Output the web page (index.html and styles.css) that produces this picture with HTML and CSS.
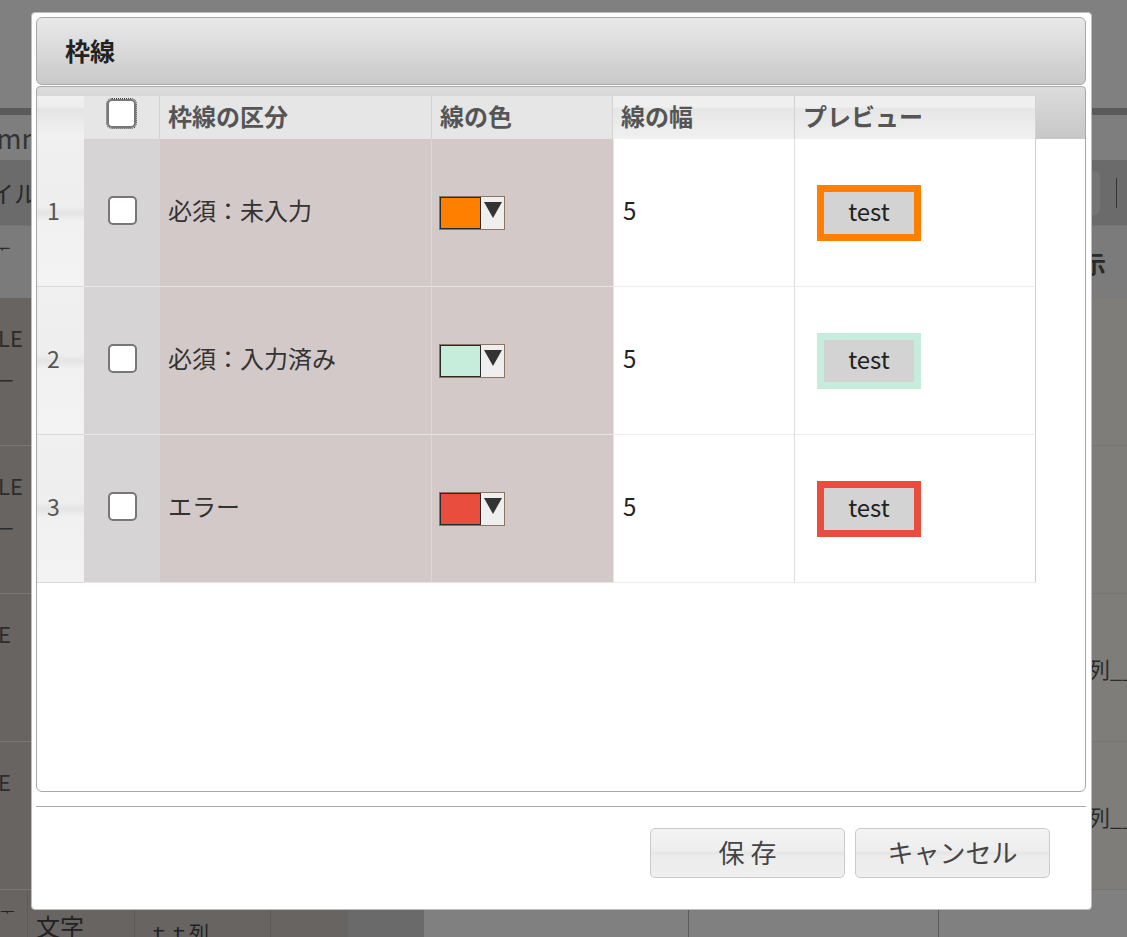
FILE: index.html
```html
<!DOCTYPE html>
<html lang="ja">
<head>
<meta charset="utf-8">
<title>枠線</title>
<link rel="stylesheet" href="styles.css">
</head>
<body>
<div class="page">
  <div class="bg-top"></div>
  <div class="bg-rule"></div>
  <div class="bg-tabs"><span class="tabs-text">Comm</span></div>
  <div class="bg-tool">
    <span class="tool-text">ファイル</span>
    <div class="tool-right"><span class="tool-box"></span><span class="tool-line"></span></div>
  </div>
  <div class="bg-head"><span class="head-mark">ᅮ</span><span class="head-text">表示</span></div>
  <div class="bg-row">
    <div class="bg-l"><span class="l-text">LE</span><span class="l-dash">—</span></div>
    <div class="bg-m"></div>
    <div class="bg-r"></div>
  </div>
  <div class="bg-row">
    <div class="bg-l"><span class="l-text">LE</span><span class="l-dash">—</span></div>
    <div class="bg-m"></div>
    <div class="bg-r"></div>
  </div>
  <div class="bg-row">
    <div class="bg-l"><span class="l-text">E</span></div>
    <div class="bg-m"></div>
    <div class="bg-r"><span class="r-text">列__</span></div>
  </div>
  <div class="bg-row">
    <div class="bg-l"><span class="l-text">E</span></div>
    <div class="bg-m"></div>
    <div class="bg-r"><span class="r-text">列__</span></div>
  </div>
  <div class="bg-last">
    <div class="lc c1">ᅮ</div>
    <div class="lc c2">文字</div>
    <div class="lc c3">ｔｔ列</div>
    <div class="lc c4"></div>
    <div class="lc c5"></div>
    <div class="lc c6"></div>
    <div class="lc c7"></div>
    <div class="lc c8"></div>
  </div>
</div>

<div class="dialog">
  <div class="titlebar">枠線</div>
  <div class="pane">
    <div class="grid">
      <div class="hc hnum"></div>
      <div class="hc hchk"><input type="checkbox" class="cb cb-focus"></div>
      <div class="hc hdark">枠線の区分</div>
      <div class="hc hdark">線の色</div>
      <div class="hc hlight">線の幅</div>
      <div class="hc hlight">プレビュー</div>

      <div class="c cnum">1</div>
      <div class="c cchk"><input type="checkbox" class="cb"></div>
      <div class="c ctext">必須：未入力</div>
      <div class="c ccolor"><div class="cp"><span class="sw sw-orange"></span><span class="arr"><span class="tri"></span></span></div></div>
      <div class="c cwidth">5</div>
      <div class="c cprev"><div class="pv pv-orange">test</div></div>

      <div class="c cnum">2</div>
      <div class="c cchk"><input type="checkbox" class="cb"></div>
      <div class="c ctext">必須：入力済み</div>
      <div class="c ccolor"><div class="cp"><span class="sw sw-mint"></span><span class="arr"><span class="tri"></span></span></div></div>
      <div class="c cwidth">5</div>
      <div class="c cprev"><div class="pv pv-mint">test</div></div>

      <div class="c cnum">3</div>
      <div class="c cchk"><input type="checkbox" class="cb"></div>
      <div class="c ctext">エラー</div>
      <div class="c ccolor"><div class="cp"><span class="sw sw-red"></span><span class="arr"><span class="tri"></span></span></div></div>
      <div class="c cwidth">5</div>
      <div class="c cprev"><div class="pv pv-red">test</div></div>
    </div>
  </div>
  <div class="sep"></div>
  <div class="buttons">
    <div class="btn">保 存</div>
    <div class="btn">キャンセル</div>
  </div>
</div>
</body>
</html>
```
FILE: styles.css
```css
html, body {
  margin: 0;
  padding: 0;
}
body {
  width: 1127px;
  height: 937px;
  overflow: hidden;
  position: relative;
  background: #808080;
  font-family: "Noto Sans CJK JP", "Noto Sans", sans-serif;
}

/* ---------- dimmed page behind the modal ---------- */
.page {
  display: flex;
  flex-direction: column;
  width: 1127px;
  color: #2c2c2c;
}
.bg-top { height: 108px; background: #808080; }
.bg-rule { height: 7px; background: #5a5a5a; }
.bg-tabs {
  height: 45px;
  background: #7e7e7e;
  display: flex;
  align-items: center;
  font-size: 27px;
  overflow: hidden;
}
.tabs-text { margin-left: -37px; color: #333; }
.bg-tool {
  height: 65px;
  background: #6b6b6b;
  display: flex;
  align-items: center;
  justify-content: space-between;
  font-size: 24px;
  overflow: hidden;
}
.tool-text { margin-left: -58px; color: #2a2a2a; white-space: nowrap; }
.tool-right {
  display: flex;
  align-items: center;
  gap: 16px;
  padding-right: 10px;
}
.tool-box {
  width: 40px;
  height: 44px;
  background: #747474;
  border-radius: 0 6px 6px 0;
}
.tool-line {
  width: 1px;
  height: 30px;
  background: #333;
}
.bg-head {
  height: 73px;
  box-sizing: border-box;
  background: #7b7b7b;
  border-top: 1px solid #737373;
  display: flex;
  align-items: center;
  justify-content: space-between;
  font-size: 24px;
  font-weight: bold;
  overflow: hidden;
}
.head-mark { margin-left: -6px; font-weight: normal; font-size: 18px; margin-top: -30px; }
.head-text { margin-right: 21px; color: #2a2a2a; }
.bg-row {
  height: 148px;
  display: flex;
}
.bg-l {
  width: 31px;
  background: #686462;
  border-bottom: 1px solid #7a7775;
  display: flex;
  flex-direction: column;
  font-size: 22px;
  overflow: hidden;
  box-sizing: border-box;
  white-space: nowrap;
}
.l-text { margin-top: 24px; margin-left: -2px; line-height: 30px; }
.l-dash { margin-left: -6px; line-height: 30px; margin-top: 10px; }
.bg-m { flex: 1; background: #6a6a6a; }
.bg-r {
  width: 35px;
  background: #7e7d79;
  border-bottom: 1px solid #76756f;
  display: flex;
  align-items: center;
  font-size: 22px;
  overflow: hidden;
  box-sizing: border-box;
  white-space: nowrap;
}
.r-text { margin-left: -4px; color: #2a2a2a; }
.bg-last {
  height: 47px;
  display: flex;
  font-size: 24px;
  color: #222;
}
.lc {
  box-sizing: border-box;
  border-right: 1px solid #5b5b5b;
  padding-top: 18px;
  overflow: hidden;
  white-space: nowrap;
}
.c1 { width: 28px; background: #686462; font-size: 16px; padding-top: 8px; }
.c2 { width: 107px; background: #686462; padding-left: 8px; }
.c3 { width: 136px; background: #686462; padding-left: 14px; padding-top: 28px; font-size: 20px; }
.c4 { width: 77px; background: #686462; border-right: none; }
.c5 { width: 76px; background: #6a6a6a; border-right: none; }
.c6 { width: 265px; background: #808080; }
.c7 { width: 250px; background: #808080; }
.c8 { flex: 1; background: #808080; border-right: none; }

/* ---------- modal dialog ---------- */
.dialog {
  position: absolute;
  left: 31px;
  top: 12px;
  width: 1061px;
  height: 898px;
  box-sizing: border-box;
  background: #fff;
  border: 1px solid #bdbdbd;
  border-radius: 4px;
  padding: 4px 5px 4px 4px;
  display: flex;
  flex-direction: column;
}
.titlebar {
  height: 68px;
  box-sizing: border-box;
  border: 1px solid #a8a8a8;
  border-radius: 6px;
  background: linear-gradient(#e9e9e9, #c9c9c9);
  display: flex;
  align-items: center;
  padding-left: 28px;
  padding-bottom: 3px;
  font-size: 25px;
  font-weight: bold;
  color: #222;
}
.pane {
  margin-top: 1px;
  height: 706px;
  box-sizing: border-box;
  border: 1px solid #a9a9a9;
  border-radius: 4px 4px 6px 6px;
  overflow: hidden;
  background: linear-gradient(#dcdcdc, #c7c7c7) top left / 100% 52px no-repeat, #fff;
}
.grid {
  display: grid;
  grid-template-columns: 47px 76px 272px 181px 182px 241px;
  margin-top: 9px;
  width: 999px;
}
.hc {
  height: 43px;
  box-sizing: border-box;
  border-right: 1px solid #d2d2d2;
  display: flex;
  align-items: center;
  padding-left: 8px;
  padding-bottom: 4px;
  font-size: 24px;
  font-weight: bold;
  color: #555;
  white-space: nowrap;
}
.hnum {
  background: linear-gradient(#f1f1f1 0%, #ededed 25%, #e4e4e4 30%, #f2f2f2 100%);
  border-right: none;
}
.hchk {
  background: #e6e6e6;
  justify-content: center;
  align-items: flex-start;
  padding: 3px 0 0 0;
}
.hdark { background: #e6e6e6; }
.hlight {
  background: linear-gradient(#efefef 0%, #efefef 25%, #e6e6e6 30%, #ececec 70%, #f0f0f0 100%);
}
.hlight:last-child { border-right: 1px solid #cfcfcf; }

.c {
  height: 148px;
  box-sizing: border-box;
  border-bottom: 1px solid #e6e6e6;
  border-right: 1px solid #dedede;
  display: flex;
  align-items: center;
  padding-bottom: 6px;
  font-size: 24px;
  color: #333;
  white-space: nowrap;
}
.cnum {
  padding-left: 10px;
  color: #555;
  font-size: 23px;
  border-bottom-color: #d9d9d9;
  border-right: none;
  background: linear-gradient(#f0f0f0 0%, #eeeeee 46%, #e4e4e4 50%, #f1f1f1 56%, #f3f3f3 100%);
}
.cchk {
  background: #d6d4d5;
  justify-content: center;
  border-right: none;
  border-bottom-color: #e8e8e8;
  padding-bottom: 0;
}
.ctext {
  background: #d2c9c8;
  padding-left: 8px;
  border-right-color: #ddd6d5;
  border-bottom-color: #e8e4e4;
}
.ccolor {
  background: #d2c9c8;
  padding-left: 7px;
  padding-bottom: 0;
  border-right: none;
  border-bottom-color: #e8e4e4;
}
.cwidth {
  padding-left: 9px;
  color: #222;
  border-left: 1px solid #e4e4e4;
  border-bottom-color: #ececec;
}
.cprev {
  padding-left: 22px;
  padding-bottom: 0;
  border-right-color: #cfcfcf;
  border-bottom-color: #ececec;
}
.cb {
  appearance: none;
  -webkit-appearance: none;
  margin: 0;
  width: 29px;
  height: 29px;
  box-sizing: border-box;
  border: 2px solid #777;
  border-radius: 5px;
  background: #fff;
}
.c .cb { margin-top: -4px; }
.cb-focus {
  outline: 1px dotted #444;
  outline-offset: 0;
}

.cp {
  display: flex;
  width: 66px;
  height: 34px;
  box-sizing: border-box;
  border: 1px solid #8c7462;
}
.sw {
  width: 41px;
  height: 100%;
  box-sizing: border-box;
  border: 1px solid #2a2a2a;
}
.sw-orange { background: #ff8000; }
.sw-mint { background: #c6eddc; }
.sw-red { background: #e84d3d; }
.arr {
  flex: 1;
  background: #efefef;
  display: flex;
  justify-content: center;
  padding-top: 5px;
}
.tri {
  width: 0;
  height: 0;
  border-left: 9px solid transparent;
  border-right: 9px solid transparent;
  border-top: 16px solid #333;
}

.pv {
  width: 104px;
  height: 56px;
  box-sizing: border-box;
  border: 7px solid;
  background: #d3d3d3;
  display: flex;
  align-items: center;
  justify-content: center;
  font-size: 24px;
  color: #222;
  padding-bottom: 5px;
}
.pv-orange { border-color: #ff8000; }
.pv-mint { border-color: #c6eddc; }
.pv-red { border-color: #e84d3d; }

.sep {
  margin-top: 14px;
  height: 1px;
  background: #ababab;
}
.buttons {
  display: flex;
  justify-content: flex-end;
  gap: 10px;
  margin-top: 21px;
  padding-right: 36px;
}
.btn {
  width: 195px;
  height: 50px;
  box-sizing: border-box;
  border: 1px solid #cacaca;
  border-radius: 5px;
  background: linear-gradient(#f3f3f3 0%, #eeeeee 44%, #e5e5e5 50%, #ececec 56%, #efefef 100%);
  display: flex;
  align-items: center;
  justify-content: center;
  padding-bottom: 4px;
  font-size: 26px;
  color: #444;
}
```
